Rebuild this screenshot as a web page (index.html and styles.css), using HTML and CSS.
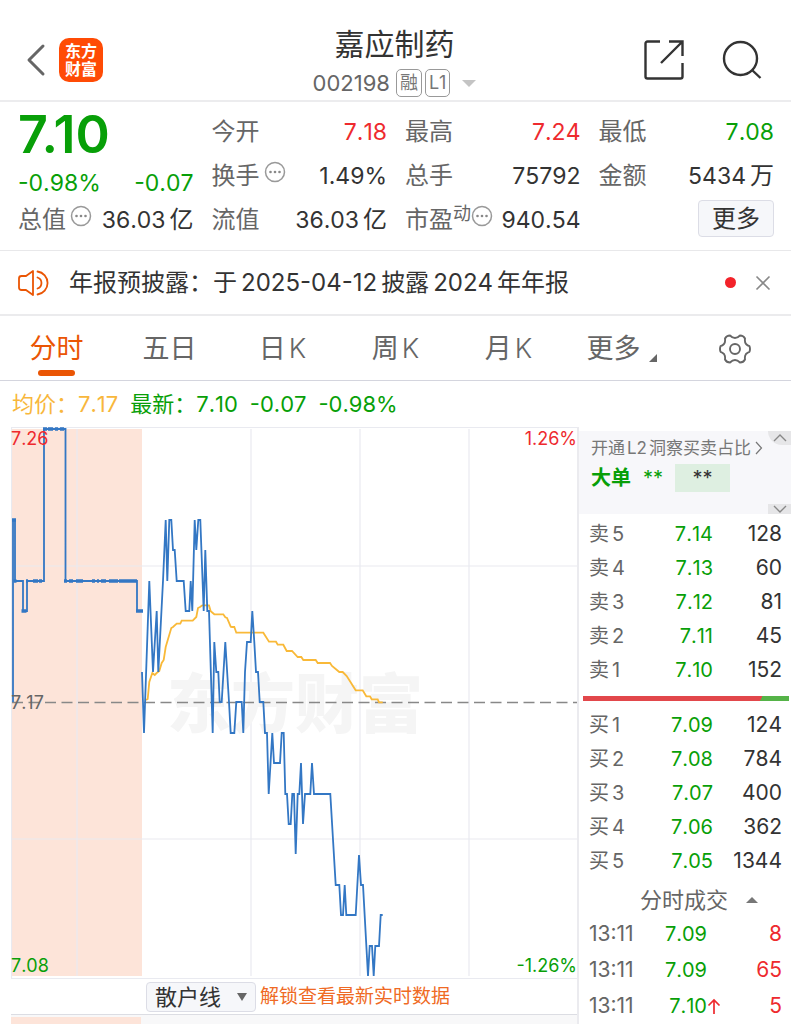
FILE: index.html
```html
<!DOCTYPE html>
<html lang="zh-CN">
<head>
<meta charset="utf-8">
<meta name="viewport" content="width=device-width, initial-scale=1">
<title>嘉应制药 002198</title>
<link rel="stylesheet" href="styles.css">
</head>
<body>
<header class="topbar">
  <div class="topbar-side">
    <button class="icon-btn" aria-label="返回"><svg width="20" height="34" viewBox="0 0 20 34"><path d="M17 3 3 17l14 14" fill="none" stroke="#666" stroke-width="3" stroke-linecap="round" stroke-linejoin="round"/></svg></button>
    <a class="logo" href="#"><span>东方</span><span>财富</span></a>
  </div>
  <div class="stock">
    <h1 class="stock-name">嘉应制药</h1>
    <div class="stock-code"><span class="code">002198</span><span class="tag">融</span><span class="tag">L1</span><i class="caret-down"></i></div>
  </div>
  <div class="topbar-side topbar-actions">
    <button class="icon-btn" aria-label="分享"><svg width="42" height="42" viewBox="0 0 42 42"><g fill="none" stroke="#333" stroke-width="2.4"><path d="M17 2.5H4.5a2 2 0 0 0-2 2v33a2 2 0 0 0 2 2h33a2 2 0 0 0 2-2V24"/><path d="M26 2.5h13.5V17M39.500 2.500 18 24"/></g></svg></button>
    <button class="icon-btn" aria-label="搜索"><svg width="42" height="42" viewBox="0 0 42 42"><g fill="none" stroke="#333" stroke-width="2.4"><circle cx="19.500" cy="19.500" r="16.500"/><path d="m31 31 8.500 8"/></g></svg></button>
  </div>
</header>

<section class="quote">
  <div class="quote-main">
    <div class="price down">7.10</div>
    <div class="pair change down"><span>-0.98%</span><span>-0.07</span></div>
    <div class="pair cap"><span class="label">总值<svg class="more-dot" viewBox="0 0 22 22"><use href="#dots"/></svg></span><span>36.03<b class="unit">亿</b></span></div>
  </div>
  <div class="quote-col">
    <div class="pair"><span class="label">今开</span><span class="up">7.18</span></div>
    <div class="pair"><span class="label">换手<svg class="more-dot" viewBox="0 0 22 22"><use href="#dots"/></svg></span><span>1.49%</span></div>
    <div class="pair"><span class="label">流值</span><span>36.03<b class="unit">亿</b></span></div>
  </div>
  <div class="quote-col">
    <div class="pair"><span class="label">最高</span><span class="up">7.24</span></div>
    <div class="pair"><span class="label">总手</span><span>75792</span></div>
    <div class="pair"><span class="label">市盈<small class="sup">动</small><svg class="more-dot tight" viewBox="0 0 22 22"><use href="#dots"/></svg></span><span>940.54</span></div>
  </div>
  <div class="quote-col">
    <div class="pair"><span class="label">最低</span><span class="down">7.08</span></div>
    <div class="pair"><span class="label">金额</span><span>5434<b class="unit">万</b></span></div>
    <div class="pair end"><button class="more-btn">更多</button></div>
  </div>
</section>

<section class="notice">
  <svg width="32" height="28" viewBox="0 0 32 28"><g fill="none" stroke="#ea5504" stroke-width="1.800" stroke-linejoin="round" stroke-linecap="round"><path d="M15 2v24l-7-5H3.500Q1 21 1 18.500v-9Q1 7 3.500 7H8Z"/><path d="M19.500 8.500a5.800 5.800 0 0 1 0 11M19.500 2.500a11.600 11.600 0 0 1 0 23"/></g></svg>
  <a class="notice-text" href="#">年报预披露：于<span class="num">2025-04-12</span>披露<span class="num">2024</span>年年报</a>
  <i class="dot"></i>
  <button class="icon-btn" aria-label="关闭"><svg width="16" height="16" viewBox="0 0 16 16"><path d="m1.500 1.500 13 13m0-13-13 13" stroke="#888" stroke-width="1.600"/></svg></button>
</section>

<nav class="tabs">
  <button class="tab active">分时</button>
  <button class="tab">五日</button>
  <button class="tab">日<span class="k">K</span></button>
  <button class="tab">周<span class="k">K</span></button>
  <button class="tab">月<span class="k">K</span></button>
  <button class="tab">更多<i class="corner"></i></button>
  <button class="tab" aria-label="设置"><svg width="32" height="30" viewBox="0 0 32 30"><g fill="none" stroke="#666" stroke-width="1.900" stroke-linejoin="round"><path d="M11 1.500Q13.500 4 16 4t5-2.500q3.500 0 5 3Q25.500 8 27 10q1.500 1.500 3.500 2.200 1 2.800 0 5.600Q28.500 18.500 27 20q-1.500 2-1 5.500-1.500 3-5 3Q18.500 26 16 26t-5 2.500q-3.500 0-5-3Q6.500 22 5 20 3.500 18.500 1.500 17.800q-1-2.800 0-5.600Q3.500 11.500 5 10q1.500-2 1-5.500 1.500-3 5-3Z"/><circle cx="16" cy="15" r="5"/></g></svg></button>
</nav>

<div class="summary"><span class="avg">均价：7.17</span><span class="down">最新：7.10</span><span class="down">-0.07</span><span class="down">-0.98%</span></div>

<main class="board">
  <section class="chart-pane">
    <svg class="chart" viewBox="11 427 566 552" role="img" aria-label="分时走势">
      <rect x="12" y="429" width="130" height="547" fill="#fde4d9"/>
      <g class="grid-lines"><path d="M77 429v547M251 429v547M360 429v547M469 429v547M12 566h566M12 839h566"/><path d="M11.500 427v552M11 427.500h567M11 978.500h567"/></g>
      <text class="watermark" x="167" y="727">东方财富</text>
      <path d="M12 702.500h566" stroke="#888" stroke-width="1.300" stroke-dasharray="11 5.500"/>
      <path class="avg-line" d="M146 700 147.700 699 149.300 682 152.300 673 154.700 675 156.700 673 159.300 671 161.700 663 163.700 660 165.700 647 171.300 628 173 627 176.700 623.700H180.300L181.700 620.700H192.700L196.300 617 198 608 200 607 202.300 605.300H209L210.700 611.300 214.300 614.300H223.300L225.300 617.300 227 618 229 622.700 230.700 626.700 232 627 234.300 627 236.300 632.700H263.300L269 641.700H276L277.700 644.700H283.300L286.700 651H292L297.700 657H301.300L303.300 660H315.700L317.700 663H330L332 666 335.700 669 339.300 672H342.700L346.700 676 355.700 690.300H362.700L366.300 696.300H370L371.700 699.300H377.700L379 702.300H382.700"/>
      <path class="price-line" d="M13 702V520H15V581H23V611H27V581H44V429H65.500V581H137V611H142M142 672 144 733 149.300 581 153 672 156.700 611 158.300 672 163 581 165.700 520 167.300 581 169.300 520H171.300L173 550H174.700L176.700 581H183.700L185.700 611H189.300L190.700 581 192.300 611 194.700 520 196.300 550 198.300 520H200.300L203.700 611 205.300 550 207.300 611H209L212.700 733 214.300 642 216.300 672H218.300L219.700 702H221.700L225.300 642 229 702 230.700 733H234.300L236.300 702H241.700L243.300 733 245 672 247 642H250.700L252.300 611 254.300 642 256 672H258L259.700 702H263.300L265 733H267L268.700 794 272.300 733 274 763H280L281.700 733H283.700L285.300 794H287L288.700 824H290.700L292.300 794H294L295.700 854 297.700 794H299.300L301 763 303 824 305 794H310.300L312 763 314 794H330.300L335.700 885H339.300L341 915H343L344.700 885 346.300 915H355.700L359 855 361 885H363L368 976 369.700 946H372L373.700 976 375.300 946H379L380.700 915H382.700"/>
      <path class="ticks" d="M12 520h4M13.500 581h3M21.500 611h5M26 581h2M33 581h5M39 581h3M43 429h4M48 429h5M55 429h3M60 429h4M64 581h3M69 581h4M76 581h7M92 581h3M97 581h2M101 581h5M109 581h9M119 581h18M136 611h7"/>
      <g class="axis"><text x="11" y="445" class="up">7.26</text><text x="577" y="445" text-anchor="end" class="up">1.26%</text><text x="11" y="709" class="mid">7.17</text><text x="11" y="972" class="down">7.08</text><text x="577" y="972" text-anchor="end" class="down">-1.26%</text></g>
    </svg>
    <div class="unlock">
      <label class="picker"><select class="select" aria-label="指标"><option>散户线</option></select></label>
      <a class="unlock-link" href="#">解锁查看最新实时数据</a>
    </div>
    <div class="subchart"><i class="subchart-pre"></i></div>
  </section>

  <aside class="depth">
    <div class="l2">
      <a class="l2-link" href="#">开通<span class="l2-mark">L2</span>洞察买卖占比<svg width="8" height="14" viewBox="0 0 8 14"><path d="m1 1 5.500 6L1 13" fill="none" stroke="#777" stroke-width="1.200"/></svg></a>
      <div class="l2-row"><strong>大单</strong><span class="stars">**</span><span class="stars-box">**</span></div>
      <button class="fold fold-up" aria-label="收起"><svg width="14" height="8" viewBox="0 0 14 8"><path d="m1 7 6-6 6 6"/></svg></button>
      <button class="fold fold-down" aria-label="展开"><svg width="14" height="8" viewBox="0 0 14 8"><path d="m1 1 6 6 6-6"/></svg></button>
    </div>
    <table class="book">
      <tr><th>卖<span>5</span></th><td class="down">7.14</td><td>128</td></tr>
      <tr><th>卖<span>4</span></th><td class="down">7.13</td><td>60</td></tr>
      <tr><th>卖<span>3</span></th><td class="down">7.12</td><td>81</td></tr>
      <tr><th>卖<span>2</span></th><td class="down">7.11</td><td>45</td></tr>
      <tr><th>卖<span>1</span></th><td class="down">7.10</td><td>152</td></tr>
    </table>
    <div class="ratio"></div>
    <table class="book">
      <tr><th>买<span>1</span></th><td class="down">7.09</td><td>124</td></tr>
      <tr><th>买<span>2</span></th><td class="down">7.08</td><td>784</td></tr>
      <tr><th>买<span>3</span></th><td class="down">7.07</td><td>400</td></tr>
      <tr><th>买<span>4</span></th><td class="down">7.06</td><td>362</td></tr>
      <tr><th>买<span>5</span></th><td class="down">7.05</td><td>1344</td></tr>
    </table>
    <button class="deals-title">分时成交<i class="caret-up"></i></button>
    <table class="deals">
      <tr><th>13:11</th><td class="down">7.09</td><td class="mark"></td><td class="up">8</td></tr>
      <tr><th>13:11</th><td class="down">7.09</td><td class="mark"></td><td class="up">65</td></tr>
      <tr><th>13:11</th><td class="down">7.10</td><td class="mark"><svg width="14" height="17" viewBox="0 0 14 17"><path d="M7 16V2M1.500 7.500 7 2l5.500 5.500" fill="none" stroke="#ee2a2e" stroke-width="1.700"/></svg></td><td class="up">5</td></tr>
    </table>
  </aside>
</main>

<svg class="defs" width="0" height="0"><symbol id="dots" viewBox="0 0 22 22"><circle cx="11" cy="11" r="9.500" fill="none" stroke="#999" stroke-width="1.500"/><g fill="#888"><circle cx="6.500" cy="11" r="1.300"/><circle cx="11" cy="11" r="1.300"/><circle cx="15.500" cy="11" r="1.300"/></g></symbol></svg>
</body>
</html>
```
FILE: styles.css
```css
* { box-sizing: border-box; }
body {
  margin: 0;
  background: #fff;
  color: #333;
  font-family: Inter, "Noto Sans CJK SC", sans-serif;
  font-size: 24px;
  font-kerning: none;
  line-height: 32px;
  overflow-x: hidden;
}
button, select { font: inherit; font-kerning: none; color: inherit; background: none; border: 0; padding: 0; margin: 0; }
a { color: inherit; text-decoration: none; }
.up { color: #ee2a2e; fill: #ee2a2e; }
.down { color: #089f08; fill: #089f08; }
.icon-btn { display: flex; }
.defs { position: absolute; }

.topbar {
  display: grid;
  grid-template-columns: 1fr auto 1fr;
  height: 102px;
  padding: 18px 28px 0 26px;
  border-bottom: 2px solid #ececee;
}
.topbar-side { display: flex; align-items: center; gap: 13px; }
.topbar-actions { justify-content: flex-end; gap: 36px; }
.logo {
  display: flex;
  flex-direction: column;
  justify-content: center;
  align-items: center;
  width: 44px;
  height: 44px;
  border-radius: 10px;
  background: #ff4b05;
  color: #fff;
  font-size: 16px;
  font-weight: 700;
  line-height: 18px;
}
.stock { display: flex; flex-direction: column; align-items: center; padding-top: 6px; }
.stock-name { margin: 0; font-size: 30px; font-weight: 400; line-height: 40px; }
.stock-code { display: flex; align-items: center; gap: 3px; height: 38px; color: #666; font-size: 22px; }
.code { margin-right: 3px; }
.tag {
  height: 28px;
  min-width: 25px;
  padding: 0 3px;
  border: 1px solid #999;
  border-radius: 5px;
  font-size: 18px;
  line-height: 26px;
  text-align: center;
  color: #777;
}
.caret-down { margin-left: 9px; border: 7px solid transparent; border-top-color: #c4c4c4; border-bottom: 0; }

.quote {
  display: grid;
  grid-template-columns: repeat(4, 1fr);
  gap: 18px;
  padding: 8px 17px 8px 18px;
  border-bottom: 1px solid #e8e8ea;
}
.quote .pair { display: flex; justify-content: space-between; align-items: center; height: 44px; font-size: 23px; }
.quote .end { justify-content: flex-end; align-items: flex-start; padding-top: 2px; }
.quote .change { height: 38px; }
.quote .cap { height: 36px; }
.price { height: 54px; font-size: 52px; font-weight: 600; font-kerning: normal; line-height: 50px; }
.quote .label { display: flex; align-items: center; color: #666; font-size: 24px; }
.unit { margin-left: 4px; font-size: 24px; font-weight: 400; }
.more-dot { width: 22px; height: 22px; margin: 0 0 8px 4px; }
.more-dot.tight { margin-left: 0; }
.sup { margin-bottom: 12px; font-size: 18px; line-height: 20px; }
.more-btn {
  width: 76px;
  height: 37px;
  border: 1px solid #dcdde6;
  border-radius: 4px;
  background: #f6f7fa;
  font-size: 24px;
}

.notice {
  display: flex;
  align-items: center;
  height: 65px;
  padding: 0 20px 0 18px;
  border-bottom: 2px solid #ebebed;
}
.notice-text { flex: 1; margin-left: 19px; }
.num { margin: 0 4px; }
.dot { width: 11px; height: 11px; margin-right: 19px; border-radius: 50%; background: #f3232a; }

.tabs {
  display: grid;
  grid-template-columns: repeat(7, 1fr);
  height: 65px;
  border-bottom: 1px solid #d4d5de;
  color: #666;
  font-size: 27px;
}
.tab { position: relative; display: flex; justify-content: center; align-items: center; padding-top: 2px; }
.tab.active { color: #ea5504; }
.tab.active::after {
  content: "";
  position: absolute;
  bottom: 4px;
  width: 37px;
  height: 6px;
  border-radius: 3px;
  background: #ea5504;
}
.k { margin-left: 3px; font-weight: 300; }
.corner { margin: 18px 0 0 8px; border: 4px solid #666; border-top-color: transparent; border-left-color: transparent; }

.summary {
  display: flex;
  gap: 12px;
  height: 46px;
  padding-left: 12px;
  font-size: 22px;
  line-height: 46px;
}
.avg { color: #f8b73c; }

.board { display: grid; grid-template-columns: minmax(0, 1fr) 214px; }
.chart-pane { padding-left: 11px; }
.chart { display: block; width: 100%; height: auto; }
.grid-lines { fill: none; stroke: #e9eaf0; stroke-width: 1.2; }
.watermark { fill: #f5f5f5; font-size: 64px; font-weight: 900; }
.avg-line { fill: none; stroke: #f9b938; stroke-width: 1.8; }
.price-line { fill: none; stroke: #3377c4; stroke-width: 1.8; }
.ticks { fill: none; stroke: #3377c4; stroke-width: 3.6; }
.axis { font-size: 18px; }
.mid { fill: #666; }
.unlock {
  display: flex;
  align-items: center;
  gap: 4px;
  height: 36px;
  padding-left: 135px;
  border-bottom: 1px solid #dcdde3;
}
.picker { position: relative; display: flex; }
.picker::after {
  content: "";
  position: absolute;
  top: 11px;
  right: 9px;
  border: 5px solid transparent;
  border-top: 8px solid #666;
  border-bottom: 0;
}
.select {
  appearance: none;
  width: 110px;
  height: 30px;
  padding-left: 8px;
  border: 1px solid #dcdde6;
  border-radius: 4px;
  background: #f6f7fa;
  font-size: 22px;
  line-height: 28px;
}
.unlock-link { color: #ef6a24; font-size: 19px; white-space: nowrap; }
.subchart { display: flex; height: 9px; padding-top: 2px; background: #f8f8f9; }
.subchart-pre { width: 23%; background: #fde4d9; }

.depth { padding-top: 4px; border-left: 2px solid #ebebef; }
.l2 { position: relative; height: 83px; padding: 4px 0 0 12px; background: #f7f7fa; }
.l2-link { display: flex; align-items: center; height: 26px; color: #777; font-size: 17px; white-space: nowrap; }
.l2-link svg { margin-left: 4px; }
.l2-mark { margin: 0 2px; }
.l2-row { display: flex; align-items: center; height: 34px; color: #089f08; font-size: 20px; }
.stars { margin-left: 12px; }
.stars-box { width: 55px; height: 28px; margin-left: 12px; background: #deefe1; color: #333; line-height: 28px; text-align: center; }
.fold { position: absolute; right: 0; display: flex; justify-content: center; align-items: center; width: 23px; background: #e6e6e8; }
.fold path { fill: none; stroke: #888; stroke-width: 1.4; }
.fold-up { top: 0; height: 14px; border-radius: 0 0 0 14px; }
.fold-down { bottom: 0; height: 10px; }

.book, .deals { width: 100%; border-collapse: collapse; font-size: 21px; table-layout: fixed; }
.book { margin: 3px 0 2px; }
.book tr { height: 34px; }
th, td { padding: 0; font-weight: 400; line-height: 32px; text-align: right; white-space: nowrap; }
th { width: 62px; padding-left: 10px; color: #666; text-align: left; }
.book th { font-size: 20px; }
.book th span { margin-left: 3px; }
.book td:nth-child(2) { width: 72px; }
.book td:nth-child(2), .deals td:nth-child(2) { font-size: 20px; }
.book td:last-child, .deals td:last-child { padding-right: 9px; }
.ratio { height: 5px; margin: 9px 2px 7px 4px; background: linear-gradient(120deg, #e2474b 86%, #55b348 86%); }
.deals-title { display: flex; justify-content: center; align-items: center; width: 100%; height: 32px; margin-top: 6px; padding-left: 28px; color: #666; font-size: 22px; }
.caret-up { margin-left: 18px; border: 6px solid transparent; border-bottom-color: #777; border-top: 0; }
.deals tr { height: 36px; }
.deals td:nth-child(2) { width: 66px; }
.deals .mark { width: 15px; }
.mark svg { display: block; }
```
